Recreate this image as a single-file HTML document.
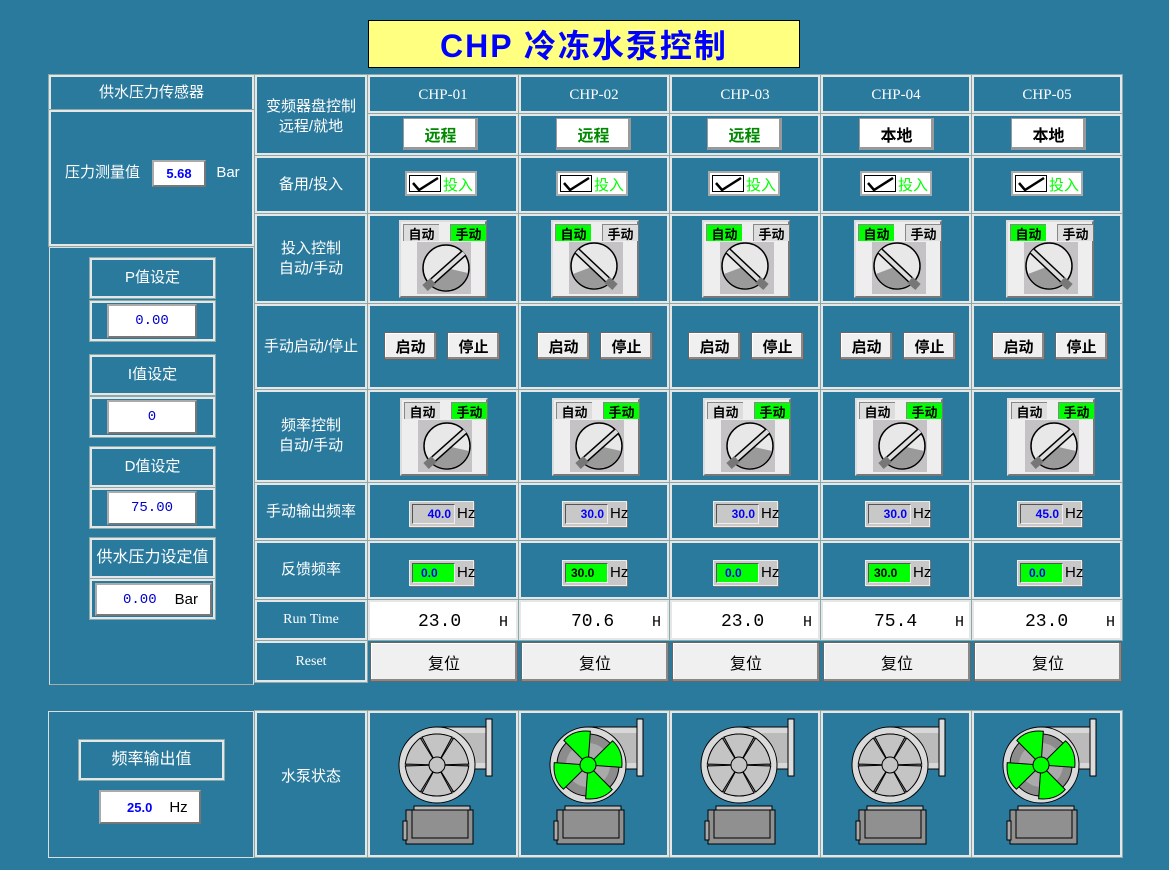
<!DOCTYPE html>
<html><head><meta charset="utf-8"><style>
*{box-sizing:border-box;margin:0;padding:0}
body{width:1169px;height:870px;background:#2a7a9e;position:relative;overflow:hidden;font-family:"Liberation Sans","Noto Sans CJK SC",sans-serif;color:#fff}
.a{position:absolute}
.c{position:absolute;border:2px solid #e6e6e6;outline:1px solid #8aa;}
.lb{position:absolute;display:flex;align-items:center;justify-content:center;text-align:center;font-size:15px;line-height:20px;color:#fff}
.hd{font-family:"Liberation Serif","Noto Serif CJK SC",serif;font-size:15px}
.btn{position:absolute;background:#f0f0f0;border:1px solid #666;box-shadow:inset -2px -2px 0 #888,inset 1px 1px 0 #fff;color:#000;font-weight:bold;font-size:15px;display:flex;align-items:center;justify-content:center}
.rem{position:absolute;background:#fff;border:1px solid #999;box-shadow:inset -2px -2px 0 #999;font-weight:bold;font-size:16px;display:flex;align-items:center;justify-content:center}
.chk{position:absolute;background:#fff;border:2px solid #aaa;width:72px;height:25px}
.sw{position:absolute;width:88px;height:78px;background:#eee;border:2px solid #777;border-top-color:#ddd;border-left-color:#ddd}
.tg{position:absolute;top:2px;height:17px;width:36px;font-size:13px;font-weight:bold;color:#000;display:flex;align-items:center;justify-content:center;border-left:1px solid #888;border-top:1px solid #888}
.hz{position:absolute;width:65px;height:26px;background:#c8c8c8;border:1px solid #eee;box-shadow:1px 1px 0 #777}
.hz .v{position:absolute;left:2px;top:2px;width:43px;height:20px;border:1px solid #555;border-right-color:#eee;border-bottom-color:#eee;font-size:12px;font-weight:bold;color:#00f;display:flex;align-items:center;justify-content:flex-end;padding-right:3px}
.hz .u{position:absolute;left:47px;top:3px;font-size:15px;color:#000}
.wf{position:absolute;background:#fff;border:2px solid #aaa;border-right-color:#777;border-bottom-color:#777;color:#00c;display:flex;align-items:center;justify-content:center;font-family:"Liberation Mono",monospace;font-size:14px}
</style></head><body>
<svg width="0" height="0" style="position:absolute">
<defs>
<symbol id="kM" viewBox="0 0 54 52">
<rect width="54" height="52" fill="#c4c2c4"/>
<circle cx="29" cy="26" r="23" fill="#e8e8e8" stroke="#000" stroke-width="1.5"/>
<path d="M12 41 A23 23 0 0 0 51 31 L 29 26 Z" fill="#9a9a9a"/>
<line x1="47" y1="11" x2="10" y2="44" stroke="#000" stroke-width="7"/>
<line x1="47" y1="11" x2="10" y2="44" stroke="#ddd" stroke-width="4"/>
<line x1="16" y1="39" x2="8" y2="46" stroke="#777" stroke-width="8"/>
</symbol>
<symbol id="kA" viewBox="0 0 54 52">
<rect width="54" height="52" fill="#c4c2c4"/>
<circle cx="25" cy="24" r="23" fill="#e8e8e8" stroke="#000" stroke-width="1.5"/>
<path d="M4 32 A23 23 0 0 0 40 41 L 25 24 Z" fill="#9a9a9a"/>
<line x1="8" y1="9" x2="44" y2="43" stroke="#000" stroke-width="7"/>
<line x1="8" y1="9" x2="44" y2="43" stroke="#ddd" stroke-width="4"/>
<line x1="38" y1="38" x2="46" y2="45" stroke="#777" stroke-width="8"/>
</symbol>
<symbol id="pump" viewBox="0 0 150 146">
<rect x="66" y="16" width="52" height="42" fill="#d8d8d8" stroke="#000"/>
<rect x="90" y="22" width="28" height="30" fill="#bbb"/>
<rect x="116" y="8" width="6" height="57" fill="#ddd" stroke="#000"/>
<rect x="44" y="95" width="56" height="6" fill="#bbb" stroke="#000"/>
<rect x="36" y="99" width="67" height="34" fill="#909090" stroke="#000"/>
<rect x="42" y="99" width="56" height="28" fill="none" stroke="#000"/>
<rect x="33" y="110" width="4" height="19" fill="#aaa" stroke="#000"/>
<circle cx="67" cy="54" r="38" fill="#dadada" stroke="#000"/>
<circle cx="67" cy="54" r="31" fill="#8c8c8c" stroke="#000"/>
<circle cx="67" cy="54" r="22" fill="#aaa"/>
</symbol>
<symbol id="bladeG" viewBox="0 0 150 146">
<g fill="#c4c4c4" stroke="#000">
<path d="M67 54 L52 26 Q67 20 82 26 Z"/>
<path d="M67 54 L52 26 Q67 20 82 26 Z" transform="rotate(60 67 54)"/>
<path d="M67 54 L52 26 Q67 20 82 26 Z" transform="rotate(120 67 54)"/>
<path d="M67 54 L52 26 Q67 20 82 26 Z" transform="rotate(180 67 54)"/>
<path d="M67 54 L52 26 Q67 20 82 26 Z" transform="rotate(240 67 54)"/>
<path d="M67 54 L52 26 Q67 20 82 26 Z" transform="rotate(300 67 54)"/>
<circle cx="67" cy="54" r="8" fill="#c4c4c4"/>
</g>
</symbol>
<symbol id="bladeN" viewBox="0 0 150 146">
<g fill="#00ff00" stroke="#000">
<path d="M67 54 L50 24 Q62 16 78 22 Z" transform="rotate(-15 67 54)"/>
<path d="M67 54 L50 24 Q62 16 78 22 Z" transform="rotate(75 67 54)"/>
<path d="M67 54 L50 24 Q62 16 78 22 Z" transform="rotate(165 67 54)"/>
<path d="M67 54 L50 24 Q62 16 78 22 Z" transform="rotate(255 67 54)"/>
<circle cx="67" cy="54" r="8" fill="#00ff00"/>
</g>
</symbol>
</defs></svg>

<!-- title -->
<div class="a" style="left:368px;top:20px;width:432px;height:48px;background:#ffff80;border:1px solid #000;color:#0000ff;font-weight:bold;font-size:32px;letter-spacing:2px;display:flex;align-items:center;justify-content:center;">CHP 冷冻水泵控制</div>

<!-- left panel -->
<div class="c" style="left:49px;top:75px;width:205px;height:36px"></div>
<div class="lb" style="left:49px;top:75px;width:205px;height:36px">供水压力传感器</div>
<div class="c" style="left:49px;top:110px;width:205px;height:136px"></div>
<div class="lb" style="left:60px;top:163px;width:85px;height:20px">压力测量值</div>
<div class="wf" style="left:152px;top:160px;width:54px;height:27px;font-family:'Liberation Sans';font-weight:bold;font-size:13px;color:#00f">5.68</div>
<div class="lb" style="left:214px;top:163px;width:28px;height:20px">Bar</div>

<div class="a" style="left:49px;top:247px;width:205px;height:438px;border:1px solid #ddd;border-bottom-color:#aaa"></div>
<div class="c" style="left:90px;top:258px;width:125px;height:40px"></div>
<div class="lb" style="left:90px;top:258px;width:125px;height:40px">P值设定</div>
<div class="c" style="left:90px;top:301px;width:125px;height:40px"></div>
<div class="wf" style="left:107px;top:304px;width:90px;height:34px">0.00</div>
<div class="c" style="left:90px;top:355px;width:125px;height:40px"></div>
<div class="lb" style="left:90px;top:355px;width:125px;height:40px">I值设定</div>
<div class="c" style="left:90px;top:397px;width:125px;height:40px"></div>
<div class="wf" style="left:107px;top:400px;width:90px;height:34px">0</div>
<div class="c" style="left:90px;top:447px;width:125px;height:40px"></div>
<div class="lb" style="left:90px;top:447px;width:125px;height:40px">D值设定</div>
<div class="c" style="left:90px;top:488px;width:125px;height:40px"></div>
<div class="wf" style="left:107px;top:491px;width:90px;height:34px">75.00</div>
<div class="c" style="left:90px;top:538px;width:125px;height:40px"></div>
<div class="lb" style="left:90px;top:538px;width:125px;height:40px;font-size:16px">供水压力设定值</div>
<div class="c" style="left:90px;top:579px;width:125px;height:40px"></div>
<div class="wf" style="left:95px;top:583px;width:117px;height:33px;justify-content:flex-start;padding-left:26px">0.00<span style="font-family:'Liberation Sans';color:#000;font-size:15px;margin-left:18px">Bar</span></div>

<div class="a" style="left:48px;top:711px;width:206px;height:147px;border:1px solid #ddd"></div>
<div class="c" style="left:79px;top:740px;width:145px;height:40px"></div>
<div class="lb" style="left:79px;top:740px;width:145px;height:40px;font-size:16px">频率输出值</div>
<div class="wf" style="left:99px;top:790px;width:102px;height:34px;justify-content:flex-start;padding-left:26px;font-family:'Liberation Sans';font-weight:bold;font-size:13px;color:#00f">25.0<span style="font-weight:normal;color:#000;font-size:15px;margin-left:17px">Hz</span></div>

<!-- row labels -->
<div class="c" style="left:255px;top:75px;width:112px;height:80px"></div>
<div class="lb" style="left:255px;top:77px;width:112px;height:80px">变频器盘控制<br>远程/就地</div>
<div class="c" style="left:255px;top:156px;width:112px;height:57px"></div>
<div class="lb" style="left:255px;top:156px;width:112px;height:57px">备用/投入</div>
<div class="c" style="left:255px;top:214px;width:112px;height:89px"></div>
<div class="lb" style="left:255px;top:214px;width:112px;height:89px">投入控制<br>自动/手动</div>
<div class="c" style="left:255px;top:304px;width:112px;height:85px"></div>
<div class="lb" style="left:255px;top:304px;width:112px;height:85px">手动启动/停止</div>
<div class="c" style="left:255px;top:390px;width:112px;height:92px"></div>
<div class="lb" style="left:255px;top:390px;width:112px;height:92px">频率控制<br>自动/手动</div>
<div class="c" style="left:255px;top:483px;width:112px;height:57px"></div>
<div class="lb" style="left:255px;top:483px;width:112px;height:57px">手动输出频率</div>
<div class="c" style="left:255px;top:541px;width:112px;height:58px"></div>
<div class="lb" style="left:255px;top:541px;width:112px;height:58px">反馈频率</div>
<div class="c" style="left:255px;top:600px;width:112px;height:40px"></div>
<div class="lb hd" style="left:255px;top:600px;width:112px;height:40px;font-size:14px">Run Time</div>
<div class="c" style="left:255px;top:641px;width:112px;height:41px"></div>
<div class="lb hd" style="left:255px;top:641px;width:112px;height:41px;font-size:14px">Reset</div>
<div class="c" style="left:255px;top:711px;width:112px;height:146px"></div>
<div class="lb" style="left:255px;top:704px;width:112px;height:146px">水泵状态</div>

<!-- column 1 x=368 -->
<div class="c" style="left:368px;top:75px;width:150px;height:38px"></div>
<div class="lb hd" style="left:368px;top:76px;width:150px;height:38px">CHP-01</div>
<div class="c" style="left:368px;top:114px;width:150px;height:41px"></div>
<div class="rem" style="left:403px;top:118px;width:75px;height:32px;color:#080">远程</div>
<div class="c" style="left:368px;top:156px;width:150px;height:57px"></div>
<div class="chk" style="left:405px;top:171px"><svg class="a" style="left:2px;top:2px" width="32" height="18"><rect x="0.5" y="0.5" width="31" height="16" fill="#fff" stroke="#000"/><path d="M4 8 L10 15 L29 3" stroke="#000" stroke-width="2.5" fill="none"/></svg><span class="a" style="left:36px;top:1px;color:#0f0;font-size:15px">投入</span></div>
<div class="c" style="left:368px;top:214px;width:150px;height:89px"></div>
<div class="sw" style="left:399px;top:220px"><div class="tg" style="left:2px;background:#ddd">自动</div><div class="tg" style="left:49px;background:#0f0">手动</div><svg class="a" style="left:16px;top:20px" width="54" height="52"><use href="#kM"/></svg></div>
<div class="c" style="left:368px;top:304px;width:150px;height:85px"></div>
<div class="btn" style="left:384px;top:332px;width:53px;height:28px">启动</div>
<div class="btn" style="left:447px;top:332px;width:53px;height:28px">停止</div>
<div class="c" style="left:368px;top:390px;width:150px;height:92px"></div>
<div class="sw" style="left:400px;top:398px"><div class="tg" style="left:2px;background:#ddd">自动</div><div class="tg" style="left:49px;background:#0f0">手动</div><svg class="a" style="left:16px;top:20px" width="54" height="52"><use href="#kM"/></svg></div>
<div class="c" style="left:368px;top:483px;width:150px;height:57px"></div>
<div class="hz" style="left:409px;top:501px"><div class="v">40.0</div><div class="u">Hz</div></div>
<div class="c" style="left:368px;top:541px;width:150px;height:58px"></div>
<div class="hz" style="left:409px;top:560px"><div class="v" style="background:#0f0;justify-content:flex-start;padding-left:8px">0.0</div><div class="u">Hz</div></div>
<div class="c" style="left:368px;top:600px;width:150px;height:40px;background:#fff"></div>
<div class="a" style="left:418px;top:612px;color:#000;font-family:'Liberation Mono',monospace;font-size:18px">23.0</div><div class="a" style="left:499px;top:614px;color:#000;font-family:'Liberation Mono',monospace;font-size:15px">H</div>
<div class="btn" style="left:370px;top:642px;width:148px;height:40px;font-weight:normal;font-size:16px">复位</div>
<div class="c" style="left:368px;top:711px;width:150px;height:146px"></div>
<svg class="a" style="left:370px;top:711px" width="150" height="146"><use href="#pump"/><use href="#bladeG"/></svg>

<!-- column 2 x=519 -->
<div class="c" style="left:519px;top:75px;width:150px;height:38px"></div>
<div class="lb hd" style="left:519px;top:76px;width:150px;height:38px">CHP-02</div>
<div class="c" style="left:519px;top:114px;width:150px;height:41px"></div>
<div class="rem" style="left:556px;top:118px;width:75px;height:32px;color:#080">远程</div>
<div class="c" style="left:519px;top:156px;width:150px;height:57px"></div>
<div class="chk" style="left:556px;top:171px"><svg class="a" style="left:2px;top:2px" width="32" height="18"><rect x="0.5" y="0.5" width="31" height="16" fill="#fff" stroke="#000"/><path d="M4 8 L10 15 L29 3" stroke="#000" stroke-width="2.5" fill="none"/></svg><span class="a" style="left:36px;top:1px;color:#0f0;font-size:15px">投入</span></div>
<div class="c" style="left:519px;top:214px;width:150px;height:89px"></div>
<div class="sw" style="left:551px;top:220px"><div class="tg" style="left:2px;background:#0f0">自动</div><div class="tg" style="left:49px;background:#ddd">手动</div><svg class="a" style="left:16px;top:20px" width="54" height="52"><use href="#kA"/></svg></div>
<div class="c" style="left:519px;top:304px;width:150px;height:85px"></div>
<div class="btn" style="left:537px;top:332px;width:53px;height:28px">启动</div>
<div class="btn" style="left:600px;top:332px;width:53px;height:28px">停止</div>
<div class="c" style="left:519px;top:390px;width:150px;height:92px"></div>
<div class="sw" style="left:552px;top:398px"><div class="tg" style="left:2px;background:#ddd">自动</div><div class="tg" style="left:49px;background:#0f0">手动</div><svg class="a" style="left:16px;top:20px" width="54" height="52"><use href="#kM"/></svg></div>
<div class="c" style="left:519px;top:483px;width:150px;height:57px"></div>
<div class="hz" style="left:562px;top:501px"><div class="v">30.0</div><div class="u">Hz</div></div>
<div class="c" style="left:519px;top:541px;width:150px;height:58px"></div>
<div class="hz" style="left:562px;top:560px"><div class="v" style="background:#0f0;justify-content:flex-start;padding-left:5px;color:#000">30.0</div><div class="u">Hz</div></div>
<div class="c" style="left:519px;top:600px;width:150px;height:40px;background:#fff"></div>
<div class="a" style="left:571px;top:612px;color:#000;font-family:'Liberation Mono',monospace;font-size:18px">70.6</div><div class="a" style="left:652px;top:614px;color:#000;font-family:'Liberation Mono',monospace;font-size:15px">H</div>
<div class="btn" style="left:521px;top:642px;width:148px;height:40px;font-weight:normal;font-size:16px">复位</div>
<div class="c" style="left:519px;top:711px;width:150px;height:146px"></div>
<svg class="a" style="left:521px;top:711px" width="150" height="146"><use href="#pump"/><use href="#bladeN"/></svg>

<!-- column 3 x=670 -->
<div class="c" style="left:670px;top:75px;width:150px;height:38px"></div>
<div class="lb hd" style="left:670px;top:76px;width:150px;height:38px">CHP-03</div>
<div class="c" style="left:670px;top:114px;width:150px;height:41px"></div>
<div class="rem" style="left:707px;top:118px;width:75px;height:32px;color:#080">远程</div>
<div class="c" style="left:670px;top:156px;width:150px;height:57px"></div>
<div class="chk" style="left:708px;top:171px"><svg class="a" style="left:2px;top:2px" width="32" height="18"><rect x="0.5" y="0.5" width="31" height="16" fill="#fff" stroke="#000"/><path d="M4 8 L10 15 L29 3" stroke="#000" stroke-width="2.5" fill="none"/></svg><span class="a" style="left:36px;top:1px;color:#0f0;font-size:15px">投入</span></div>
<div class="c" style="left:670px;top:214px;width:150px;height:89px"></div>
<div class="sw" style="left:702px;top:220px"><div class="tg" style="left:2px;background:#0f0">自动</div><div class="tg" style="left:49px;background:#ddd">手动</div><svg class="a" style="left:16px;top:20px" width="54" height="52"><use href="#kA"/></svg></div>
<div class="c" style="left:670px;top:304px;width:150px;height:85px"></div>
<div class="btn" style="left:688px;top:332px;width:53px;height:28px">启动</div>
<div class="btn" style="left:751px;top:332px;width:53px;height:28px">停止</div>
<div class="c" style="left:670px;top:390px;width:150px;height:92px"></div>
<div class="sw" style="left:703px;top:398px"><div class="tg" style="left:2px;background:#ddd">自动</div><div class="tg" style="left:49px;background:#0f0">手动</div><svg class="a" style="left:16px;top:20px" width="54" height="52"><use href="#kM"/></svg></div>
<div class="c" style="left:670px;top:483px;width:150px;height:57px"></div>
<div class="hz" style="left:713px;top:501px"><div class="v">30.0</div><div class="u">Hz</div></div>
<div class="c" style="left:670px;top:541px;width:150px;height:58px"></div>
<div class="hz" style="left:713px;top:560px"><div class="v" style="background:#0f0;justify-content:flex-start;padding-left:8px">0.0</div><div class="u">Hz</div></div>
<div class="c" style="left:670px;top:600px;width:150px;height:40px;background:#fff"></div>
<div class="a" style="left:721px;top:612px;color:#000;font-family:'Liberation Mono',monospace;font-size:18px">23.0</div><div class="a" style="left:803px;top:614px;color:#000;font-family:'Liberation Mono',monospace;font-size:15px">H</div>
<div class="btn" style="left:672px;top:642px;width:148px;height:40px;font-weight:normal;font-size:16px">复位</div>
<div class="c" style="left:670px;top:711px;width:150px;height:146px"></div>
<svg class="a" style="left:672px;top:711px" width="150" height="146"><use href="#pump"/><use href="#bladeG"/></svg>

<!-- column 4 x=821 -->
<div class="c" style="left:821px;top:75px;width:150px;height:38px"></div>
<div class="lb hd" style="left:821px;top:76px;width:150px;height:38px">CHP-04</div>
<div class="c" style="left:821px;top:114px;width:150px;height:41px"></div>
<div class="rem" style="left:859px;top:118px;width:75px;height:32px;color:#000">本地</div>
<div class="c" style="left:821px;top:156px;width:150px;height:57px"></div>
<div class="chk" style="left:860px;top:171px"><svg class="a" style="left:2px;top:2px" width="32" height="18"><rect x="0.5" y="0.5" width="31" height="16" fill="#fff" stroke="#000"/><path d="M4 8 L10 15 L29 3" stroke="#000" stroke-width="2.5" fill="none"/></svg><span class="a" style="left:36px;top:1px;color:#0f0;font-size:15px">投入</span></div>
<div class="c" style="left:821px;top:214px;width:150px;height:89px"></div>
<div class="sw" style="left:854px;top:220px"><div class="tg" style="left:2px;background:#0f0">自动</div><div class="tg" style="left:49px;background:#ddd">手动</div><svg class="a" style="left:16px;top:20px" width="54" height="52"><use href="#kA"/></svg></div>
<div class="c" style="left:821px;top:304px;width:150px;height:85px"></div>
<div class="btn" style="left:840px;top:332px;width:53px;height:28px">启动</div>
<div class="btn" style="left:903px;top:332px;width:53px;height:28px">停止</div>
<div class="c" style="left:821px;top:390px;width:150px;height:92px"></div>
<div class="sw" style="left:855px;top:398px"><div class="tg" style="left:2px;background:#ddd">自动</div><div class="tg" style="left:49px;background:#0f0">手动</div><svg class="a" style="left:16px;top:20px" width="54" height="52"><use href="#kM"/></svg></div>
<div class="c" style="left:821px;top:483px;width:150px;height:57px"></div>
<div class="hz" style="left:865px;top:501px"><div class="v">30.0</div><div class="u">Hz</div></div>
<div class="c" style="left:821px;top:541px;width:150px;height:58px"></div>
<div class="hz" style="left:865px;top:560px"><div class="v" style="background:#0f0;justify-content:flex-start;padding-left:5px;color:#000">30.0</div><div class="u">Hz</div></div>
<div class="c" style="left:821px;top:600px;width:150px;height:40px;background:#fff"></div>
<div class="a" style="left:874px;top:612px;color:#000;font-family:'Liberation Mono',monospace;font-size:18px">75.4</div><div class="a" style="left:955px;top:614px;color:#000;font-family:'Liberation Mono',monospace;font-size:15px">H</div>
<div class="btn" style="left:823px;top:642px;width:148px;height:40px;font-weight:normal;font-size:16px">复位</div>
<div class="c" style="left:821px;top:711px;width:150px;height:146px"></div>
<svg class="a" style="left:823px;top:711px" width="150" height="146"><use href="#pump"/><use href="#bladeG"/></svg>

<!-- column 5 x=972 -->
<div class="c" style="left:972px;top:75px;width:150px;height:38px"></div>
<div class="lb hd" style="left:972px;top:76px;width:150px;height:38px">CHP-05</div>
<div class="c" style="left:972px;top:114px;width:150px;height:41px"></div>
<div class="rem" style="left:1011px;top:118px;width:75px;height:32px;color:#000">本地</div>
<div class="c" style="left:972px;top:156px;width:150px;height:57px"></div>
<div class="chk" style="left:1011px;top:171px"><svg class="a" style="left:2px;top:2px" width="32" height="18"><rect x="0.5" y="0.5" width="31" height="16" fill="#fff" stroke="#000"/><path d="M4 8 L10 15 L29 3" stroke="#000" stroke-width="2.5" fill="none"/></svg><span class="a" style="left:36px;top:1px;color:#0f0;font-size:15px">投入</span></div>
<div class="c" style="left:972px;top:214px;width:150px;height:89px"></div>
<div class="sw" style="left:1006px;top:220px"><div class="tg" style="left:2px;background:#0f0">自动</div><div class="tg" style="left:49px;background:#ddd">手动</div><svg class="a" style="left:16px;top:20px" width="54" height="52"><use href="#kA"/></svg></div>
<div class="c" style="left:972px;top:304px;width:150px;height:85px"></div>
<div class="btn" style="left:992px;top:332px;width:53px;height:28px">启动</div>
<div class="btn" style="left:1055px;top:332px;width:53px;height:28px">停止</div>
<div class="c" style="left:972px;top:390px;width:150px;height:92px"></div>
<div class="sw" style="left:1007px;top:398px"><div class="tg" style="left:2px;background:#ddd">自动</div><div class="tg" style="left:49px;background:#0f0">手动</div><svg class="a" style="left:16px;top:20px" width="54" height="52"><use href="#kM"/></svg></div>
<div class="c" style="left:972px;top:483px;width:150px;height:57px"></div>
<div class="hz" style="left:1017px;top:501px"><div class="v">45.0</div><div class="u">Hz</div></div>
<div class="c" style="left:972px;top:541px;width:150px;height:58px"></div>
<div class="hz" style="left:1017px;top:560px"><div class="v" style="background:#0f0;justify-content:flex-start;padding-left:8px">0.0</div><div class="u">Hz</div></div>
<div class="c" style="left:972px;top:600px;width:150px;height:40px;background:#fff"></div>
<div class="a" style="left:1025px;top:612px;color:#000;font-family:'Liberation Mono',monospace;font-size:18px">23.0</div><div class="a" style="left:1106px;top:614px;color:#000;font-family:'Liberation Mono',monospace;font-size:15px">H</div>
<div class="btn" style="left:974px;top:642px;width:148px;height:40px;font-weight:normal;font-size:16px">复位</div>
<div class="c" style="left:972px;top:711px;width:150px;height:146px"></div>
<svg class="a" style="left:974px;top:711px" width="150" height="146"><use href="#pump"/><use href="#bladeN"/></svg>
</body></html>
